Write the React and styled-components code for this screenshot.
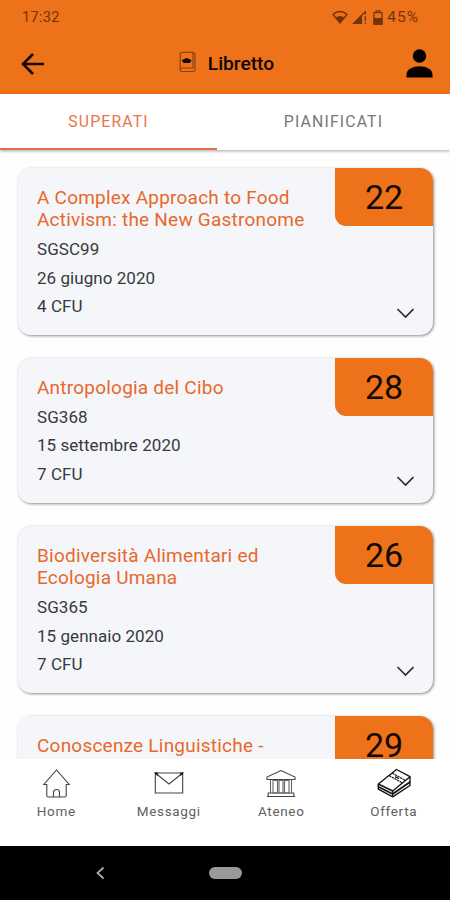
import React from 'react';
import styled, { createGlobalStyle } from 'styled-components';

const ORANGE = '#ee7219';

const GlobalStyle = createGlobalStyle`
  * {
    box-sizing: border-box;
  }

  body {
    margin: 0;
    background: #fff;
    font-family: Roboto, 'Liberation Sans', sans-serif;
  }
`;

// --- Layout ---
const Screen = styled.div`
  display: flex;
  flex-direction: column;
  width: 450px;
  height: 900px;
  overflow: hidden;
  background: #fefefe;
`;

const Header = styled.header`
  flex: none;
  height: 94px;
  background: ${ORANGE};
`;

const StatusBar = styled.div`
  display: flex;
  align-items: center;
  height: 34px;
  padding: 0 31px 0 22px;
  color: #73340a;
  font-size: 14.5px;
  letter-spacing: 0.3px;
`;

const StatusIcons = styled.div`
  display: flex;
  align-items: center;
  gap: 4px;
  margin-left: auto;
`;

const Battery = styled.div`
  display: flex;
  align-items: center;
  gap: 4px;
  margin-left: 2px;
  font-size: 15.5px;
  letter-spacing: 1px;
`;

const TitleBar = styled.div`
  display: grid;
  grid-template-columns: 60px 1fr 60px;
  align-items: center;
  height: 59px;
  padding: 0 17px 0 20px;

  > svg:last-child {
    justify-self: end;
  }
`;

const Title = styled.h1`
  display: flex;
  align-items: center;
  justify-content: center;
  gap: 12px;
  margin: 0;
  font-size: 19.2px;
  font-weight: 500;
  color: #0d0602;

  svg {
    margin-top: -3px;
  }
`;

// --- Tabs ---
const Tabs = styled.nav`
  position: relative;
  z-index: 1;
  display: flex;
  flex: none;
  height: 56px;
  background: #fff;
  box-shadow: 0 1px 3px rgba(0, 0, 0, 0.35);
`;

const Tab = styled.div`
  flex: ${props => (props.$active ? '0 0 217px' : '1')};
  display: flex;
  align-items: center;
  justify-content: center;
  padding-bottom: ${props => (props.$active ? '0' : '2px')};
  border-bottom: ${props => (props.$active ? '2px solid #e07349' : 'none')};
  color: ${props => (props.$active ? '#e7764c' : '#777')};
  font-size: 15.8px;
  letter-spacing: 1.15px;
`;

// --- Exam cards ---
const ExamList = styled.main`
  display: flex;
  flex: 1;
  flex-direction: column;
  gap: 23px;
  min-height: 0;
  padding: 18px 17px 0 18px;
  overflow: hidden;
`;

const Card = styled.article`
  display: flex;
  flex: none;
  justify-content: space-between;
  border-radius: 13px;
  background: #f4f6fa;
  box-shadow: 1px 1px 3px rgba(0, 0, 0, 0.45);
  overflow: hidden;
`;

const CardText = styled.div`
  width: 300px;
  padding: 19px 0 14.4px 19px;
  color: #39393c;
  font-size: 17px;
  line-height: 28.5px;
  letter-spacing: 0.05px;
`;

const ExamTitle = styled.h2`
  margin: 0 0 3.6px;
  color: #e8682a;
  font-size: 19px;
  font-weight: 400;
  line-height: 22.3px;
  letter-spacing: 0.22px;
  white-space: pre-line;
`;

const CardSide = styled.div`
  display: flex;
  flex-direction: column;
  align-items: flex-end;
  justify-content: space-between;
`;

const Grade = styled.div`
  width: 98px;
  height: 58px;
  border-bottom-left-radius: 11px;
  background: ${ORANGE};
  color: #120903;
  font-size: 34px;
  line-height: 58px;
  text-align: center;
`;

const Expand = styled.svg`
  margin: 0 19px 16px 0;
`;

// --- Bottom bars ---
const BottomNav = styled.nav`
  display: flex;
  flex: none;
  height: 87px;
  background: #fff;
`;

const NavItem = styled.div`
  display: flex;
  flex: 1;
  flex-direction: column;
  align-items: center;
  gap: 4px;
  padding-top: 9px;
  color: #606060;
  font-size: 13.5px;
  line-height: 17px;
  letter-spacing: 0.65px;
`;

const SystemBar = styled.div`
  display: grid;
  grid-template-columns: 1fr 33px 1fr;
  align-items: center;
  flex: none;
  height: 54px;
  background: #000;
`;

const BackKey = styled.svg`
  margin-left: 95px;
`;

const HomeKey = styled.div`
  height: 12px;
  border-radius: 6px;
  background: #999;
`;

// --- Icons ---
const WifiIcon = () => (
  <svg width="16" height="15" viewBox="0 0 16 15" fill="none" stroke="#73340a" strokeWidth="1.3">
    <path d="M1 4.5C5 .5 11 .5 15 4.5L8 13Z" strokeLinejoin="round" />
    <path d="M3.5 7.5Q8 4.5 12.5 7.5L8 13Z" fill="#73340a" stroke="none" />
  </svg>
);

const SignalIcon = () => (
  <svg width="15" height="15" viewBox="0 0 15 15" fill="#73340a">
    <path d="M0 14 10 4v10Z" />
    <path d="M10 4 14 .5v4h-1.3V3.2L10 6ZM12.7 6H14v5h-1.3zM12.7 12.3H14v1.5h-1.3z" />
  </svg>
);

const BatteryIcon = () => (
  <svg width="10" height="15" viewBox="0 0 10 15" fill="none" stroke="#73340a" strokeWidth="1.2">
    <path d="M1 2.6h8v11.6H1zM3 2V.8h4V2" />
    <path d="M1 8.5h8v5.7H1z" fill="#73340a" />
  </svg>
);

const BackIcon = () => (
  <svg width="25" height="24" viewBox="0 0 25 24" fill="none" stroke="#150800" strokeWidth="2.6">
    <path d="M24 12H3.5M13 2 3 12l10 10" />
  </svg>
);

const BookletIcon = () => (
  <svg width="17" height="22" viewBox="0 0 17 22" fill="none" stroke="#8a4312" strokeWidth="1.2">
    <path d="M1.2 18.5V3.2Q1.2 1.3 3.2 1.3H14V17H3.2Q1.2 17 1.2 18.7 1.2 20.5 3.2 20.5h11.1q1.7 0 1.7-1.7V3L14 1.3" />
    <path d="m3.5 9.5 4.2-2 4.2 2-1.4 2H5Z" fill="#160900" stroke="#160900" strokeLinejoin="round" />
  </svg>
);

const UserIcon = () => (
  <svg width="27" height="29" viewBox="0 0 27 29" fill="#030100">
    <circle cx="13.5" cy="7" r="6.7" />
    <path d="M.5 28.5v-2.7c0-11.5 26-11.5 26 0v2.7Z" />
  </svg>
);

const HomeIcon = () => (
  <svg width="29" height="31" viewBox="0 0 29 31" fill="none" stroke="#444" strokeWidth="1.1">
    <path d="M4.8 16.5H1.8L14.5 2l12.7 14.5h-3v11q0 1.5-1.5 1.5H6.3q-1.5 0-1.5-1.5Z" />
    <path d="M11.5 29v-4.5q0-3 3-3t3 3V29" />
  </svg>
);

const MailIcon = () => (
  <svg width="30" height="31" viewBox="0 0 30 31" fill="none" stroke="#444" strokeWidth="1.1">
    <path d="M1.3 5h27.4v20H1.3ZM1.3 5 15 16 28.7 5" />
    <path d="M1.3 5h1.8v1.8ZM28.7 5h-1.8v1.8Z" fill="#111" stroke="#111" />
  </svg>
);

const BankIcon = () => (
  <svg width="30" height="31" viewBox="0 0 30 31" fill="none" stroke="#444" strokeWidth="1.1">
    <path d="M1 11.5V9L15 2.5 29 9v2.5ZM2.2 28.5V25h25.6v3.5M.8 28.5h28.4" />
    <path d="M4.5 12v13M25.5 12v13M7 12.5h4.5V25H7ZM13 12.5h4V25h-4ZM18.5 12.5H23V25h-4.5Z" stroke="#666" />
  </svg>
);

const BooksIcon = () => (
  <svg width="34" height="31" viewBox="0 0 34 31" fill="#fff" stroke="#151515" strokeWidth="1.4" strokeLinejoin="round">
    <path d="M1.3 16v5.2l14.4 7.6L33 17.5V9" />
    <path d="M1.3 18.8 15.7 26 33 14" fill="none" strokeWidth="1.8" />
    <path d="M1.3 16 19.5 1.5 33 8.7 15.7 23Z" />
    <path d="m12 7.5 13 7.3M15 5l13 7.3" fill="none" strokeWidth="1.1" strokeDasharray="2.5 .6" />
    <path d="m18 8.6 4 2.2M15.7 23v5.8" fill="none" strokeWidth="1.2" />
  </svg>
);

const exams = [
  { title: 'A Complex Approach to Food\nActivism: the New Gastronome', code: 'SGSC99', date: '26 giugno 2020', credits: 4, grade: 22 },
  { title: 'Antropologia del Cibo', code: 'SG368', date: '15 settembre 2020', credits: 7, grade: 28 },
  { title: 'Biodiversità Alimentari ed\nEcologia Umana', code: 'SG365', date: '15 gennaio 2020', credits: 7, grade: 26 },
  { title: 'Conoscenze Linguistiche -', grade: 29 },
];

const navItems = [
  { label: 'Home', icon: HomeIcon },
  { label: 'Messaggi', icon: MailIcon },
  { label: 'Ateneo', icon: BankIcon },
  { label: 'Offerta', icon: BooksIcon },
];

const ExamCard = ({ exam }) => (
  <Card>
    <CardText>
      <ExamTitle>{exam.title}</ExamTitle>
      {exam.code && (
        <>
          <div>{exam.code}</div>
          <div>{exam.date}</div>
          <div>{exam.credits} CFU</div>
        </>
      )}
    </CardText>
    <CardSide>
      <Grade>{exam.grade}</Grade>
      {exam.code && (
        <Expand width="18" height="12" viewBox="0 0 18 12" fill="none" stroke="#303033" strokeWidth="1.7">
          <path d="m1.5 2 8 8 8-8" />
        </Expand>
      )}
    </CardSide>
  </Card>
);

// --- MAIN COMPONENT ---
const App = () => (
  <Screen>
    <GlobalStyle />
    <Header>
      <StatusBar>
        <span>17:32</span>
        <StatusIcons>
          <WifiIcon />
          <SignalIcon />
          <Battery>
            <BatteryIcon />
            45%
          </Battery>
        </StatusIcons>
      </StatusBar>
      <TitleBar>
        <BackIcon />
        <Title>
          <BookletIcon />
          Libretto
        </Title>
        <UserIcon />
      </TitleBar>
    </Header>

    <Tabs>
      <Tab $active>SUPERATI</Tab>
      <Tab>PIANIFICATI</Tab>
    </Tabs>

    <ExamList>
      {exams.map(exam => (
        <ExamCard key={exam.title} exam={exam} />
      ))}
    </ExamList>

    <BottomNav>
      {navItems.map(({ label, icon: NavIcon }) => (
        <NavItem key={label}>
          <NavIcon />
          {label}
        </NavItem>
      ))}
    </BottomNav>

    <SystemBar>
      <BackKey width="10" height="14" viewBox="0 0 10 14" fill="none" stroke="#aaa" strokeWidth="1.8">
        <path d="M8.5 1.5 2.5 7l6 5.5" />
      </BackKey>
      <HomeKey />
    </SystemBar>
  </Screen>
);

export default App;
